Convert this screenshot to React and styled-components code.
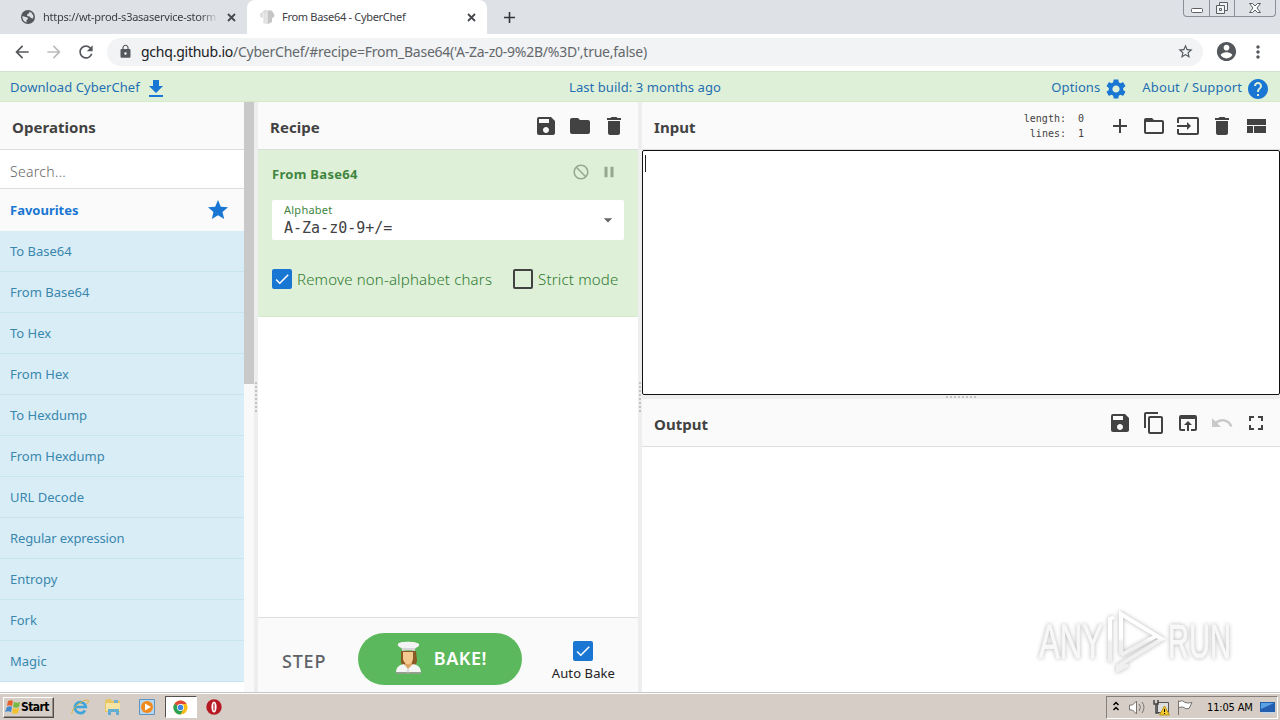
import React, { useState } from "react";
import styled, { createGlobalStyle } from "styled-components";
import {
  MdAdd,
  MdArrowBack,
  MdArrowDropDown,
  MdArrowForward,
  MdCheck,
  MdContentCopy,
  MdDelete,
  MdFileDownload,
  MdFolder,
  MdFullscreen,
  MdHelp,
  MdInput,
  MdLock,
  MdMoreVert,
  MdNotInterested,
  MdOpenInBrowser,
  MdPause,
  MdRefresh,
  MdSave,
  MdSettings,
  MdStar,
  MdStarBorder,
  MdUndo,
} from "react-icons/md";

const GlobalStyle = createGlobalStyle`
  * {
    box-sizing: border-box;
  }
  body {
    margin: 0;
    overflow: hidden;
    font-family: "Noto Sans", sans-serif;
    font-size: 13px;
    color: #424242;
    background: white;
  }
  svg {
    display: block;
    flex-shrink: 0;
  }
`;

const Screen = styled.div`
  width: 1280px;
  height: 720px;
  display: flex;
  flex-direction: column;
  overflow: hidden;
`;

const Label = styled.span`
  white-space: nowrap;
  letter-spacing: ${(props) => props.$spacing || 0}px;
`;

/* ---------- browser ---------- */

const TabStrip = styled.div`
  height: 34px;
  flex-shrink: 0;
  display: flex;
  background: #dee1e6;
  color: #3c4043;
  font-size: 11px;
`;

const Tab = styled.div`
  width: ${(props) => (props.$active ? 240 : 247)}px;
  padding: 0 9px 0 ${(props) => (props.$active ? 12 : 20)}px;
  display: flex;
  align-items: center;
  gap: 7px;
  background: ${(props) => (props.$active ? "white" : "transparent")};
  border-radius: 8px 8px 0 0;
`;

const TabTitle = styled.div`
  flex: 1;
  min-width: 0;
  white-space: nowrap;
  line-height: 20px;
  letter-spacing: ${(props) => props.$spacing || 0}px;
  ${(props) =>
    props.$fade && "mask-image: linear-gradient(90deg, #000 90%, transparent);"}
`;

const NewTab = styled.div`
  width: 44px;
  display: flex;
  align-items: center;
  justify-content: center;
  color: #33373b;
`;

const WindowButtons = styled.div`
  height: 17px;
  margin: 0 4px 0 auto;
  display: flex;
  border: 1px solid #8c9096;
  border-top: 0;
  border-radius: 0 0 4px 4px;
`;

const WindowButton = styled.div`
  width: ${(props) => props.$width}px;
  display: flex;
  align-items: center;
  justify-content: center;
  & + & {
    border-left: 1px solid #8c9096;
  }
`;

const AddressBar = styled.div`
  height: 37px;
  flex-shrink: 0;
  padding: 0 10px 2px 11px;
  display: flex;
  align-items: center;
  color: #54585c;
  background: white;
`;

const NavButton = styled.div`
  width: 32px;
  height: 28px;
  padding-left: 1px;
  display: flex;
  align-items: center;
  color: ${(props) => (props.$dim ? "#babcbe" : "#54585c")};
`;

const Omnibox = styled.div`
  width: 1096px;
  height: 28px;
  padding: 0 9px 0 11px;
  display: flex;
  align-items: center;
  background: #f1f3f4;
  border-radius: 14px;
  font-size: 14px;
`;

const Url = styled.div`
  flex: 1;
  margin-left: 8px;
  color: #64686c;
  white-space: nowrap;
  letter-spacing: -0.24px;
  b {
    font-weight: 400;
    color: #202124;
  }
`;

const Profile = styled.div`
  margin: 0 10px 0 12px;
`;

/* ---------- page ---------- */

const Banner = styled.div`
  height: 31px;
  flex-shrink: 0;
  padding: 0 10px;
  display: grid;
  grid-template-columns: 1fr auto 1fr;
  align-items: center;
  background: #dff0d8;
  border-top: 1px solid #d3e3cd;
  border-bottom: 1px solid #d6e9c6;
  color: #1f6fb2;
`;

const BuildInfo = styled.div`
  padding-left: 10px;
  white-space: nowrap;
  letter-spacing: 0.06px;
`;

const BannerSide = styled.div`
  display: flex;
  align-items: center;
  justify-content: ${(props) => props.$justify || "flex-start"};
  line-height: 20px;
  svg {
    color: #1976d2;
    margin-left: 4px;
    position: relative;
    top: 2px;
  }
`;

const AboutLink = styled.span`
  display: flex;
  align-items: center;
  margin-left: 14px;
`;

const Workspace = styled.div`
  height: 590px;
  flex-shrink: 0;
  display: flex;
`;

const Operations = styled.div`
  width: 244px;
`;

const ScrollTrack = styled.div`
  width: 10px;
  background: #f9f9f9;
`;

const ScrollThumb = styled.div`
  height: 282px;
  background: #c9c9c9;
`;

const Gutter = styled.div`
  ${(props) => (props.$row ? "height: 4px;" : "width: 4px;")}
  flex-shrink: 0;
  display: flex;
  align-items: center;
  justify-content: center;
  background: #eee;
  &::after {
    content: "";
    ${(props) =>
      props.$row
        ? "width: 30px; height: 2px; margin-top: 2px; border-top: 2px dotted #c4c4c4;"
        : "width: 2px; height: 30px; margin-left: 1px; border-left: 2px dotted #c4c4c4;"}
  }
`;

const Title = styled.div`
  height: 48px;
  padding: 2px 12px 0;
  display: flex;
  align-items: center;
  background: #fafafa;
  border-bottom: 1px solid #ddd;
  font-size: 15px;
  font-weight: 700;
  letter-spacing: 0.05px;
`;

const TitleIcons = styled.div`
  margin-left: auto;
  padding-bottom: 2px;
  display: flex;
  gap: 10px;
`;

const Search = styled.div`
  height: 39px;
  padding: 4px 10px 0;
  display: flex;
  align-items: center;
  border-bottom: 1px solid #ddd;
  color: #666;
  font-size: 14px;
  font-weight: 300;
  letter-spacing: 0.3px;
`;

const Category = styled.div`
  height: 42px;
  padding: 0 14px 0 10px;
  display: flex;
  align-items: center;
  justify-content: space-between;
  background: #fafafa;
  color: #1976d2;
  font-weight: 700;
`;

const Operation = styled.div`
  height: 41px;
  padding: 0 10px;
  line-height: 40px;
  background: #d9edf7;
  border-bottom: 1px solid #c6e5ef;
  color: #3a87ad;
  letter-spacing: ${(props) => (props.$long ? -0.14 : 0)}px;
`;

const Recipe = styled.div`
  width: 380px;
  display: flex;
  flex-direction: column;
`;

const RecipeBody = styled.div`
  flex: 1;
`;

const Ingredient = styled.div`
  height: 167px;
  padding: 10px 14px 0;
  background: #dff0d8;
  border-bottom: 1px solid #d6e9c6;
  color: #3f8540;
`;

const IngredientTitle = styled.div`
  height: 28px;
  padding: 0 6px 0 0;
  display: flex;
  align-items: center;
  justify-content: space-between;
  font-weight: 700;
  letter-spacing: 0.3px;
`;

const IngredientIcons = styled.div`
  display: flex;
  gap: 10px;
  padding-bottom: 4px;
  color: #96a691;
`;

const Select = styled.div`
  height: 40px;
  margin-top: 12px;
  padding: 0 6px 0 12px;
  display: flex;
  align-items: center;
  justify-content: space-between;
  background: white;
  border-radius: 2px;
  svg {
    color: #666;
  }
`;

const SelectLabel = styled.div`
  font-size: 11px;
  line-height: 16px;
  letter-spacing: 0.25px;
`;

const SelectValue = styled.div`
  font: 15px/20px "DejaVu Sans Mono", monospace;
  color: #424242;
`;

const Checks = styled.div`
  margin-top: 28px;
  display: flex;
  gap: 21px;
`;

const CheckRow = styled.label`
  display: flex;
  align-items: center;
  gap: 5px;
  line-height: 22px;
  color: #2f7a31;
  font-size: 15px;
  font-weight: 300;
`;

const Box = styled.span`
  width: 20px;
  height: 20px;
  display: flex;
  align-items: center;
  justify-content: center;
  border: 2px solid ${(props) => (props.$on ? "#1976d2" : "#424242")};
  border-radius: 2px;
  background: ${(props) => (props.$on ? "#1976d2" : "transparent")};
  color: white;
`;

const Controls = styled.div`
  height: 75px;
  display: flex;
  align-items: center;
  padding: 7px 23px 0 24px;
  background: #fafafa;
  border-top: 1px solid #ddd;
`;

const Step = styled.div`
  width: 76px;
  padding-top: 4px;
  color: #5f6368;
  font-size: 18px;
  font-weight: 500;
  letter-spacing: 0.8px;
`;

const Bake = styled.button`
  width: 164px;
  height: 52px;
  padding: 0 35px 2px;
  display: flex;
  align-items: center;
  justify-content: space-between;
  border: 0;
  border-radius: 26px;
  background: #5cb85c;
  color: white;
  font: 600 18px "Noto Sans", sans-serif;
  letter-spacing: 0.5px;
`;

const AutoBake = styled.div`
  margin-left: auto;
  padding-top: 7px;
  display: flex;
  flex-direction: column;
  align-items: center;
  gap: 2px;
  color: #222;
  font-size: 13px;
  line-height: 20px;
`;

const IO = styled.div`
  flex: 1;
  display: flex;
  flex-direction: column;
`;

const Stats = styled.div`
  margin: 0 24px 0 auto;
  padding-bottom: 2px;
  display: grid;
  grid-template-columns: auto auto;
  column-gap: 12px;
  text-align: right;
  font: 10px/15px "DejaVu Sans Mono", monospace;
  letter-spacing: 0;
`;

const InputIcons = styled(TitleIcons)`
  margin-left: 0;
`;

const InputText = styled.div`
  height: 245px;
  padding: 4px 2px;
  border: 1px solid #111;
  border-radius: 2px;
`;

const Caret = styled.div`
  width: 1px;
  height: 17px;
  background: #222;
`;

const OutputText = styled.div`
  flex: 1;
  display: flex;
  align-items: flex-end;
  justify-content: flex-end;
  padding: 0 32px 16px;
`;

/* ---------- taskbar ---------- */

const Taskbar = styled.div`
  height: 28px;
  flex-shrink: 0;
  padding: 2px 2px 1px 3px;
  display: flex;
  align-items: center;
  background: #d6cec6;
  border-top: 1px solid #c3c6c4;
  box-shadow: inset 0 1px white;
  font-family: "DejaVu Sans Condensed", "DejaVu Sans", sans-serif;
  color: black;
`;

const Start = styled.div`
  width: 51px;
  height: 21px;
  padding-left: 1px;
  display: flex;
  align-items: center;
  border: 1px solid;
  border-color: white #504c48 #504c48 white;
  box-shadow: inset -1px -1px #999189;
  font-size: 12px;
  font-weight: 700;
  letter-spacing: -0.6px;
`;

const QuickLaunch = styled.div`
  margin-left: 9px;
  display: flex;
  align-items: center;
`;

const TaskItem = styled.div`
  width: ${(props) => (props.$active ? 32 : 33.5)}px;
  height: 22px;
  display: flex;
  align-items: center;
  justify-content: center;
  ${(props) =>
    props.$active &&
    "background: white; border: 1px solid; border-color: #55504c white white #55504c; margin: 0 1px;"}
`;

const Tray = styled.div`
  width: 172px;
  height: 23px;
  margin-left: auto;
  padding-left: 5px;
  display: flex;
  align-items: center;
  border: 1px solid;
  border-color: #87807a white white #87807a;
  font-size: 11px;
`;

const Clock = styled.div`
  width: 47px;
  margin: 0 6px 0 13px;
  white-space: nowrap;
  letter-spacing: -0.15px;
`;

const FolderOutlineIcon = () => (
  <svg width="24" height="24" viewBox="0 0 24 24" fill="currentColor">
    <path d="M20 6h-8l-2-2H4c-1.1 0-2 .9-2 2v12c0 1.1.9 2 2 2h16c1.1 0 2-.9 2-2V8c0-1.1-.9-2-2-2zm0 12H4V8h16v10z" />
  </svg>
);

const LayoutIcon = () => (
  <svg width="24" height="24" viewBox="0 0 24 24" fill="currentColor">
    <path d="M3 19h6v-7H3v7zm7 0h12v-7H10v7zM3 5v6h19V5H3z" />
  </svg>
);

const AccountIcon = () => (
  <svg width="23" height="23" viewBox="0 0 24 24" fill="currentColor">
    <path d="M12 2C6.480 2 2 6.480 2 12s4.480 10 10 10 10-4.480 10-10S17.520 2 12 2zm0 3c1.660 0 3 1.340 3 3s-1.340 3-3 3-3-1.340-3-3 1.340-3 3-3zm0 14.200c-2.500 0-4.710-1.280-6-3.220.030-1.990 4-3.080 6-3.080 1.990 0 5.970 1.090 6 3.080-1.290 1.940-3.500 3.220-6 3.220z" />
  </svg>
);

const TabClose = () => (
  <svg width="13" height="13" viewBox="0 0 13 13" stroke="#45494d">
    <path d="M3 3l7 7M10 3l-7 7" strokeWidth="1.800" />
  </svg>
);

const GlobeIcon = () => (
  <svg width="16" height="16" viewBox="0 0 16 16">
    <circle cx="8" cy="8" r="7" fill="#54585c" />
    <path
      d="M2.500 7l3 1 2 .5.500 1.500-1.500 1v2.500A6 6 0 0 1 2.500 7zM9 2.500l2.500 1.200L13.500 7l-.5 2.500-2-.5-1.500-1.500-2.500-.5.500-2L9.500 4z"
      fill="#dee1e6"
    />
  </svg>
);

const HatIcon = () => (
  <svg width="16" height="16" viewBox="0 0 16 16">
    <path
      d="M4 14V9C0 9-.2 4 3.5 3.3 5 .2 8 .5 8.8 1.7 12 .3 14 2 14 4c2 1.5 1.5 5-1 5.300V13l-5 2z"
      fill="#dedede"
    />
    <path d="M9 2v13l4-2V9c3-1 3-4 1-5 0-2-2-3-5-2z" fill="#c6c6c6" />
    <path d="M4.500 4v9M7 4v10" stroke="#eee" />
  </svg>
);

const ChefIcon = () => (
  <svg width="30" height="34" viewBox="0 0 30 34">
    <path d="M8 10h15l1 9c0 5-3 5-3 5H10s-3-1-2-6z" fill="#8a5a24" />
    <path d="M12 20h7v5l-3 4-4-4z" fill="#dca566" />
    <path d="M10 11h10v6c0 4-3 6-5 6s-5-2-5-6z" fill="#f5ca91" />
    <path d="M5 3c0-3 19-3 21 0 1 3-3 3-4 5H9C8 6 4 6 5 3z" fill="#f3f3f5" />
    <path d="M9 7h13v3c-4-1-9-1-13 0z" fill="#d5d5da" />
    <path d="M3 32c0-6 3-8 8-9l4 5 5-5c5 1 8 3 8 9z" fill="#f5f5f5" />
    <path d="M3 31h25v2H3z" fill="#93a08e" />
    <path d="M15 28v4" stroke="#c5c5c5" />
  </svg>
);

const WatermarkSvg = styled.svg`
  font-family: "Liberation Sans", sans-serif;
  font-size: 49px;
  filter: drop-shadow(0 0 2px #b4b4b4);
`;

const Watermark = () => (
  <WatermarkSvg width="210" height="68" viewBox="0 0 210 68">
    <defs>
      <linearGradient
        id="fade"
        gradientUnits="userSpaceOnUse"
        x1="0"
        y1="30"
        x2="0"
        y2="34"
      >
        <stop stopColor="white" />
        <stop offset="1" stopColor="#f0f0f0" />
      </linearGradient>
    </defs>
    <g fill="url(#fade)" stroke="url(#fade)">
      <text transform="translate(1 50) scale(0.635 1)" fill="#f8f8f8" stroke="#f8f8f8">
        ANY
      </text>
      <text transform="translate(130 50) scale(0.595 1)" fill="#f8f8f8" stroke="#f8f8f8">
        RUN
      </text>
      <g fill="none" strokeWidth="4">
        <path d="M72 54V11l4-2" />
        <path d="M83 47V6l41 25-44 27v4l10-5" />
        <path d="M83 47l35-19" />
      </g>
    </g>
  </WatermarkSvg>
);

const WindowsIcon = () => (
  <svg width="16" height="16" viewBox="0 0 16 16">
    <path d="M3 2c2-1 4-1 5 0L7 7C5 6 4 6 2 7z" fill="#e5602b" />
    <path d="M9 3c2 1 4 1 6 0l-1 5c-2 1-4 1-6 0z" fill="#77b943" />
    <path d="M2 8c2-1 4-1 5 0l-1 5c-2-1-4-1-6 0z" fill="#4289ce" />
    <path d="M8 9c2 1 4 1 6 0l-1 5c-2 1-4 1-6 0z" fill="#f3c12c" />
  </svg>
);

const IeIcon = () => (
  <svg width="18" height="18" viewBox="0 0 18 18" fill="none">
    <path
      d="M14 12.500A5.500 5.500 0 1 1 14.800 9H5"
      stroke="#3da5dc"
      strokeWidth="2.700"
    />
    <path d="M1 16C-1 12 11 1 17 2c1 1 0 3-1 4" stroke="#dfb43c" />
  </svg>
);

const ExplorerIcon = () => (
  <svg width="18" height="18" viewBox="0 0 18 18">
    <path d="M1 3l2-2h4l1 2h8v11H1z" fill="#e7c661" />
    <path d="M2 5h14v8H2z" fill="#f7e4a2" />
    <path d="M4 17v-6h11v6h-3v-3H7v3z" fill="#63afd2" />
    <path d="M10 2h4v3h-4z" fill="#77b2ce" />
  </svg>
);

const PlayerIcon = () => (
  <svg width="18" height="18" viewBox="0 0 18 18">
    <path d="M1.500 1.500h15v15h-15z" fill="#b9d6ed" stroke="#5c94c4" />
    <circle cx="9" cy="9" r="6" fill="#f18a1d" />
    <path d="M7 5.500v7L13 9z" fill="white" />
  </svg>
);

const ChromeIcon = () => (
  <svg width="15" height="15" viewBox="0 0 16 16">
    <circle cx="8" cy="8" r="7.500" fill="#fbbc15" />
    <path d="M8 8L1.500 4.200A7.500 7.500 0 0 1 14.500 4.200H8z" fill="#df4939" />
    <path d="M8 8L1.500 4.200A7.500 7.500 0 0 0 8 15.500L11 10z" fill="#2aa255" />
    <circle cx="8" cy="8" r="3.700" fill="white" />
    <circle cx="8" cy="8" r="2.900" fill="#3d83df" />
  </svg>
);

const OperaIcon = () => (
  <svg width="16" height="16" viewBox="0 0 16 16">
    <circle cx="8" cy="8" r="7.700" fill="#b71922" />
    <ellipse cx="8" cy="8" rx="2.600" ry="5.500" fill="white" />
    <path d="M8 4.500v7" stroke="#c0202a" strokeWidth="1.200" />
  </svg>
);

const TrayIcons = () => (
  <svg width="82" height="20" viewBox="0 0 82 20" fill="none">
    <path
      d="M1.500 8L4 5.500 6.500 8M1.500 13L4 10.500 6.500 13"
      stroke="black"
      strokeWidth="1.500"
    />
    <g stroke="#77736f">
      <path d="M17.500 8h3l4-4v13l-4-4h-3z" fill="white" />
      <path d="M27 7q3 3 0 7M30 5q4 5 0 11" />
    </g>
    <path d="M45.500 5.500h11v10h-11z" fill="#ddd" stroke="#555" />
    <path d="M42 3v4h4V3M44 7v9h3" stroke="#444" strokeWidth="1.500" />
    <path d="M52.500 9l5 9h-10z" fill="#f7cb2d" stroke="#b99117" />
    <path d="M52.500 12v3M52.500 16v1" stroke="black" />
    <path
      d="M66.500 18V3.500M67 4.500q4-2 6 1 3 1 7 0l-3 6q-4 1-5-1-2-1-5 0"
      fill="white"
      stroke="#77736f"
    />
  </svg>
);

const DesktopIcon = () => (
  <svg width="15" height="13" viewBox="0 0 15 13">
    <path d="M0 1h15v10H0z" fill="#245eae" />
    <path d="M1 2h13L1 8z" fill="#5aa2e3" />
    <path d="M2 11h12v2H2z" fill="#c5d3e1" />
  </svg>
);

const operations = [
  "To Base64",
  "From Base64",
  "To Hex",
  "From Hex",
  "To Hexdump",
  "From Hexdump",
  "URL Decode",
  "Regular expression",
  "Entropy",
  "Fork",
  "Magic",
];

const Checkbox = ({ on, onClick }) => (
  <Box $on={on} onClick={onClick}>
    {on && <MdCheck size={18} />}
  </Box>
);

const Browser = () => (
  <>
    <TabStrip>
      <Tab>
        <GlobeIcon />
        <TabTitle $fade $spacing={-0.25}>
          https://wt-prod-s3asaservice-storm
        </TabTitle>
        <TabClose />
      </Tab>
      <Tab $active>
        <HatIcon />
        <TabTitle $spacing={-0.3}>From Base64 - CyberChef</TabTitle>
        <TabClose />
      </Tab>
      <NewTab>
        <MdAdd size={19} />
      </NewTab>
      <WindowButtons>
        <WindowButton $width={25}>
          <svg width="14" height="16" fill="white" stroke="#5c6064">
            <rect x="1.500" y="8.500" width="11" height="4" rx="1" />
          </svg>
        </WindowButton>
        <WindowButton $width={25}>
          <svg width="14" height="16" fill="#f2f3f5" stroke="#5c6064">
            <path d="M4.500 2.500h8v8h-8z" />
            <path d="M1.500 5.500h8v8h-8zM4.500 8.500h2v2h-2z" />
          </svg>
        </WindowButton>
        <WindowButton $width={41}>
          <svg width="14" height="16" fill="white" stroke="#5c6064">
            <path d="M1.500 3.500h3L7 6l2.500-2.500h3L9 8l3.500 4.500h-3L7 10l-2.500 2.500h-3L5 8z" />
          </svg>
        </WindowButton>
      </WindowButtons>
    </TabStrip>
    <AddressBar>
      <NavButton>
        <MdArrowBack size={20} />
      </NavButton>
      <NavButton $dim>
        <MdArrowForward size={20} />
      </NavButton>
      <NavButton>
        <MdRefresh size={20} />
      </NavButton>
      <Omnibox>
        <MdLock size={15} />
        <Url>
          <b>gchq.github.io</b>
          /CyberChef/#recipe=From_Base64('A-Za-z0-9%2B/%3D',true,false)
        </Url>
        <MdStarBorder size={17} />
      </Omnibox>
      <Profile>
        <AccountIcon />
      </Profile>
      <MdMoreVert size={20} />
    </AddressBar>
  </>
);

const App = () => {
  const [removeChars, setRemoveChars] = useState(true);
  const [strict, setStrict] = useState(false);
  const [autoBake, setAutoBake] = useState(true);

  return (
    <Screen>
      <GlobalStyle />
      <Browser />
      <Banner>
        <BannerSide>
          <Label $spacing={0.05}>Download CyberChef</Label>
          <MdFileDownload size={24} />
        </BannerSide>
        <BuildInfo>Last build: 3 months ago</BuildInfo>
        <BannerSide $justify="flex-end">
          <Label $spacing={0.1}>Options</Label>
          <MdSettings size={24} />
          <AboutLink>
            <Label $spacing={0.14}>About / Support</Label>
            <MdHelp size={24} />
          </AboutLink>
        </BannerSide>
      </Banner>
      <Workspace>
        <Operations>
          <Title>Operations</Title>
          <Search>Search...</Search>
          <Category>
            Favourites
            <MdStar size={24} />
          </Category>
          {operations.map((name) => (
            <Operation key={name} $long={name.length > 15}>
              {name}
            </Operation>
          ))}
        </Operations>
        <ScrollTrack>
          <ScrollThumb />
        </ScrollTrack>
        <Gutter />
        <Recipe>
          <Title>
            Recipe
            <TitleIcons>
              <MdSave size={24} />
              <MdFolder size={24} />
              <MdDelete size={24} />
            </TitleIcons>
          </Title>
          <RecipeBody>
            <Ingredient>
              <IngredientTitle>
                From Base64
                <IngredientIcons>
                  <MdNotInterested size={18} />
                  <MdPause size={18} />
                </IngredientIcons>
              </IngredientTitle>
              <Select>
                <div>
                  <SelectLabel>Alphabet</SelectLabel>
                  <SelectValue>A-Za-z0-9+/=</SelectValue>
                </div>
                <MdArrowDropDown size={20} />
              </Select>
              <Checks>
                <CheckRow>
                  <Checkbox
                    on={removeChars}
                    onClick={() => setRemoveChars(!removeChars)}
                  />
                  <Label $spacing={0.17}>Remove non-alphabet chars</Label>
                </CheckRow>
                <CheckRow>
                  <Checkbox on={strict} onClick={() => setStrict(!strict)} />
                  <Label $spacing={0.17}>Strict mode</Label>
                </CheckRow>
              </Checks>
            </Ingredient>
          </RecipeBody>
          <Controls>
            <Step>STEP</Step>
            <Bake>
              <ChefIcon />
              BAKE!
            </Bake>
            <AutoBake>
              <Checkbox on={autoBake} onClick={() => setAutoBake(!autoBake)} />
              <Label $spacing={0.1}>Auto Bake</Label>
            </AutoBake>
          </Controls>
        </Recipe>
        <Gutter />
        <IO>
          <Title>
            Input
            <Stats>
              <span>length:</span>
              <span>0</span>
              <span>lines:</span>
              <span>1</span>
            </Stats>
            <InputIcons>
              <MdAdd size={24} />
              <FolderOutlineIcon />
              <MdInput size={24} />
              <MdDelete size={24} />
              <LayoutIcon />
            </InputIcons>
          </Title>
          <InputText>
            <Caret />
          </InputText>
          <Gutter $row />
          <Title>
            Output
            <TitleIcons>
              <MdSave size={24} />
              <MdContentCopy size={24} />
              <MdOpenInBrowser size={24} />
              <MdUndo size={24} color="#c9c9c9" />
              <MdFullscreen size={24} />
            </TitleIcons>
          </Title>
          <OutputText>
            <Watermark />
          </OutputText>
        </IO>
      </Workspace>
      <Taskbar>
        <Start>
          <WindowsIcon />
          Start
        </Start>
        <QuickLaunch>
          <TaskItem>
            <IeIcon />
          </TaskItem>
          <TaskItem>
            <ExplorerIcon />
          </TaskItem>
          <TaskItem>
            <PlayerIcon />
          </TaskItem>
          <TaskItem $active>
            <ChromeIcon />
          </TaskItem>
          <TaskItem>
            <OperaIcon />
          </TaskItem>
        </QuickLaunch>
        <Tray>
          <TrayIcons />
          <Clock>11:05 AM</Clock>
          <DesktopIcon />
        </Tray>
      </Taskbar>
    </Screen>
  );
};

export default App;
